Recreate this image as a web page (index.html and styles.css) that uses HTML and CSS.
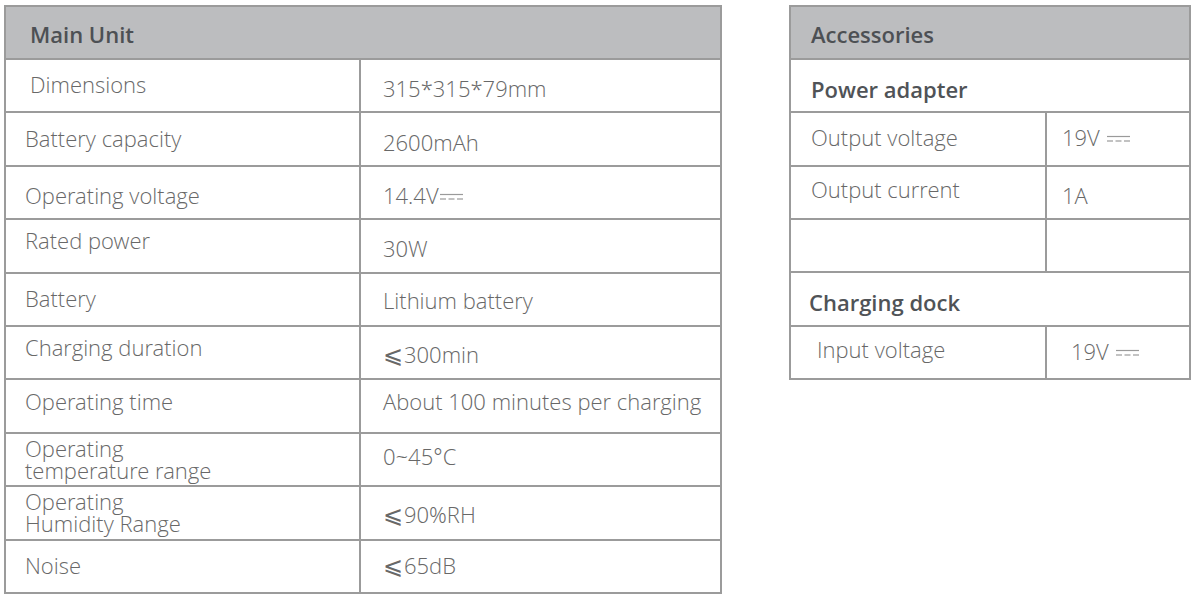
FILE: index.html
```html
<!DOCTYPE html>
<html lang="en">
<head>
<meta charset="utf-8">
<title>Specifications</title>
<link rel="stylesheet" href="styles.css">
</head>
<body>
<div class="page">
  <div class="spec main">
    <div class="cell head span">Main Unit</div>

    <div class="cell label ind">Dimensions</div>
    <div class="cell value dn">315*315*79mm</div>

    <div class="cell label">Battery capacity</div>
    <div class="cell value dn">2600mAh</div>

    <div class="cell label dn">Operating voltage</div>
    <div class="cell value dn"><span>14.4V<svg class="dc" width="23" height="8" viewBox="0 0 23 8"><line x1="0" y1="1.5" x2="23" y2="1.5"/><line x1="0" y1="6" x2="6" y2="6"/><line x1="8.5" y1="6" x2="14.5" y2="6"/><line x1="17" y1="6" x2="23" y2="6"/></svg></span></div>

    <div class="cell label up">Rated power</div>
    <div class="cell value dn">30W</div>

    <div class="cell label">Battery</div>
    <div class="cell value sdn">Lithium battery</div>

    <div class="cell label up">Charging duration</div>
    <div class="cell value sdn"><span><span class="le">⩽</span>300min</span></div>

    <div class="cell label up">Operating time</div>
    <div class="cell value up">About 100 minutes per charging</div>

    <div class="cell label two">Operating<br>temperature range</div>
    <div class="cell value sup">0~45°C</div>

    <div class="cell label two">Operating<br>Humidity Range</div>
    <div class="cell value sdn"><span><span class="le">⩽</span>90%RH</span></div>

    <div class="cell label">Noise</div>
    <div class="cell value"><span><span class="le">⩽</span>65dB</span></div>
  </div>

  <div class="spec acc">
    <div class="cell head span">Accessories</div>

    <div class="cell sub span">Power adapter</div>

    <div class="cell label">Output voltage</div>
    <div class="cell value"><span>19V <svg class="dc" width="23" height="8" viewBox="0 0 23 8"><line x1="0" y1="1.5" x2="23" y2="1.5"/><line x1="0" y1="6" x2="6" y2="6"/><line x1="8.5" y1="6" x2="14.5" y2="6"/><line x1="17" y1="6" x2="23" y2="6"/></svg></span></div>

    <div class="cell label sup">Output current</div>
    <div class="cell value dn">1A</div>

    <div class="cell label"></div>
    <div class="cell value"></div>

    <div class="cell sub span sub2">Charging dock</div>

    <div class="cell label ind sup">Input voltage</div>
    <div class="cell value ind"><span>19V <svg class="dc" width="23" height="8" viewBox="0 0 23 8"><line x1="0" y1="1.5" x2="23" y2="1.5"/><line x1="0" y1="6" x2="6" y2="6"/><line x1="8.5" y1="6" x2="14.5" y2="6"/><line x1="17" y1="6" x2="23" y2="6"/></svg></span></div>
  </div>
</div>
</body>
</html>
```

FILE: styles.css
```css
html, body {
  margin: 0;
  padding: 0;
  background: #ffffff;
}

.page {
  display: flex;
  align-items: flex-start;
  gap: 67px;
  padding: 5px 0 0 4px;
  font-family: "Open Sans Light", "Open Sans", "DejaVu Sans", sans-serif;
}

.spec {
  display: grid;
  gap: 2px;
  padding: 2px;
  background: #9b9b9b;
  box-sizing: border-box;
}

.main {
  width: 718px;
  height: 589px;
  grid-template-columns: 353px 359px;
  grid-template-rows: 51px repeat(10, 1fr);
}

.acc {
  width: 402px;
  height: 375px;
  grid-template-columns: 254px 142px;
  grid-template-rows: 51px repeat(6, 1fr);
}

.cell {
  background: #ffffff;
  display: flex;
  align-items: center;
  box-sizing: border-box;
  padding-bottom: 3px;
  font-size: 22px;
  font-weight: 300;
  color: #686868;
  white-space: nowrap;
}

.span {
  grid-column: span 2;
}

.head {
  background: #bcbdbf;
  font-family: "Open Sans", "DejaVu Sans", sans-serif;
  font-weight: 600;
  color: #4d5054;
  padding-left: 24px;
  padding-top: 6px;
}

.acc .head {
  padding-left: 20px;
}

.sub {
  font-family: "Open Sans", "DejaVu Sans", sans-serif;
  font-weight: 600;
  color: #505357;
  padding-left: 20px;
  padding-top: 9px;
}

.sub2 {
  padding-left: 18px;
}

.main .label {
  padding-left: 19px;
}

.main .label.ind {
  padding-left: 24px;
}

.main .value {
  padding-left: 22px;
}

.acc .label {
  padding-left: 20px;
}

.acc .value {
  padding-left: 15px;
}

.acc .label.ind {
  padding-left: 26px;
}

.acc .value.ind {
  padding-left: 24px;
}

.two {
  line-height: 22px;
  align-items: flex-start;
  padding-top: 3px;
}

.up {
  padding-bottom: 11px;
}

.sup {
  padding-bottom: 7px;
}

.dn {
  padding-top: 8px;
}

.sdn {
  padding-top: 5px;
}

.le {
  font-family: "DejaVu Sans", sans-serif;
  font-weight: 300;
  font-size: 24px;
  margin-right: 1px;
}

.dc {
  margin-left: 1px;
  vertical-align: 3px;
  stroke: #9a9a9a;
  stroke-width: 1.2;
  fill: none;
}
```
